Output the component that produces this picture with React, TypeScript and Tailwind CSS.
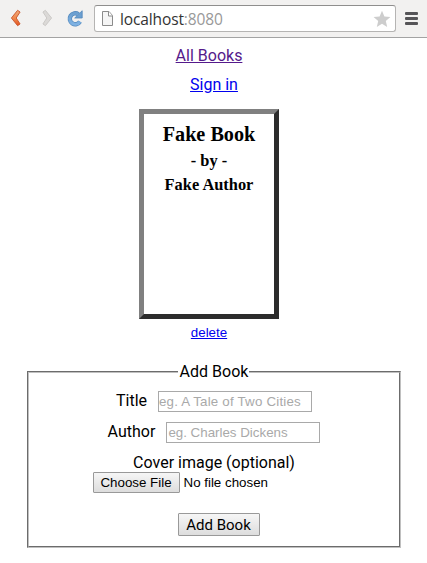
import React from 'react';

function Toolbar() {
  return (
    <header className="flex h-[38px] items-center border-b border-[#a3a3a3] bg-[#f2f1f0]">
      <svg width="94" height="37" viewBox="0 0 94 37" className="shrink-0">
        <defs>
          <linearGradient id="back" x1="0" y1="0" x2="0" y2="1">
            <stop offset="0" stopColor="#f0a878" />
            <stop offset="0.5" stopColor="#f08a4e" />
            <stop offset="1" stopColor="#e2531f" />
          </linearGradient>
          <linearGradient id="reload" x1="0" y1="0" x2="0" y2="1">
            <stop offset="0" stopColor="#6b9fd0" />
            <stop offset="1" stopColor="#7fb2e3" />
          </linearGradient>
        </defs>
        <path d="M17.6 10.3 L20.1 12 L16.2 18 L20.1 24 L17.6 25.7 L11.4 18 Z" fill="url(#back)" stroke="#c9552c" strokeWidth="0.9" strokeLinejoin="round" />
        <path d="M45.4 10.3 L42.9 12 L46.8 18 L42.9 24 L45.4 25.7 L51.6 18 Z" fill="#dbd9d7" stroke="#c8c6c4" strokeWidth="0.9" strokeLinejoin="round" />
        <path d="M78.4 14.2 A5.5 5.5 0 1 0 80 21.6" fill="none" stroke="#5288bd" strokeWidth="4.4" />
        <path d="M82.2 10.7 V18 H74.7 Z" fill="#6b9fd0" stroke="#5288bd" strokeWidth="0.8" strokeLinejoin="round" />
        <path d="M78.4 14.2 A5.5 5.5 0 1 0 80 21.6" fill="none" stroke="url(#reload)" strokeWidth="3" />
      </svg>
      <div className="flex h-[27px] w-[302px] shrink-0 items-center rounded-[3px] border border-[#b5b4b3] border-t-[#8f8e8d] bg-white pl-[7px]">
        <svg width="12" height="15" viewBox="0 0 12 15" className="shrink-0">
          <path d="M0.5 0.5 H7 L10.5 4.5 V14.5 H0.5 Z" fill="#f5f5f5" stroke="#8b8b8b" />
          <path d="M6.5 0.5 V5 H10.5" fill="#fff" stroke="#8b8b8b" />
        </svg>
        <span className="ml-[6px] w-[110px] whitespace-nowrap font-['Open_Sans','Noto_Sans',sans-serif] text-[15.5px] leading-[20px] tracking-[-0.12px] text-[#333]">
          localhost<span className="text-[#999]">:8080</span>
        </span>
        <svg width="18" height="18" viewBox="0 0 18 18" className="ml-auto mr-[4px] shrink-0">
          <path d="M9 .8 L11.4 6.4 L17.4 7 L12.8 11 L14.2 17 L9 13.8 L3.8 17 L5.2 11 L.6 7 L6.6 6.4 Z" fill="#cdcdcd" />
        </svg>
      </div>
      <div className="ml-[9px] flex w-[13px] flex-col gap-[2px]">
        <i className="h-[3px] rounded-[1px] bg-[#555457]" />
        <i className="h-[3px] rounded-[1px] bg-[#555457]" />
        <i className="h-[3px] rounded-[1px] bg-[#555457]" />
      </div>
    </header>
  );
}

function Field({ label, placeholder, spacing }: { label: string; placeholder: string; spacing: string }) {
  return (
    <label className="flex h-[31px] items-start justify-center gap-[11px]">
      <span className="leading-[19px]">{label}</span>
      <input
        placeholder={placeholder}
        className={`h-[21px] w-[154px] border border-[#a9a9a9] font-['Liberation_Sans',Arial,sans-serif] text-[13.33px] leading-[17px] placeholder:text-[#a9a9a9] ${spacing}`}
      />
    </label>
  );
}

const buttonStyle = 'rounded-[1px] border border-[#999] bg-linear-to-b from-[#f6f6f6] to-[#dddddd] text-black whitespace-nowrap';

export default function App() {
  return (
    <div className="h-[563px] w-[427px] overflow-hidden bg-white font-[Roboto,sans-serif] text-base text-black">
      <Toolbar />
      <main className="flex flex-col items-center">
        <a href="#" className="mt-[8px] -ml-[9px] leading-[19px] text-[#551a8b] underline">All Books</a>
        <a href="#" className="mt-[10px] ml-px leading-[19px] text-[#0000ee] underline">Sign in</a>
        <article className="mt-[15px] -ml-[9px] h-[210px] w-[140px] border-[5px] border-t-[#808080] border-r-[#2c2c2c] border-b-[#2c2c2c] border-l-[#808080] pt-[7px] text-center font-['Gentium_Book_Basic','Liberation_Serif',serif] font-bold">
          <h2 className="text-[20.2px] leading-[27px]">Fake Book</h2>
          <p className="pt-px text-[16.4px] leading-[24px]">- by -</p>
          <p className="text-[16.4px] leading-[24px]">Fake Author</p>
        </article>
        <a href="#" className="mt-[6px] -ml-[9px] font-['Liberation_Sans',Arial,sans-serif] text-[13.33px] leading-[15px] text-[#0000ee] underline">delete</a>
        <fieldset className="mt-[22px] h-[186px] w-[374px] border-2 border-[#c0c0c0] [border-style:groove]">
          <legend className="mx-auto pl-[2px] pr-[1px] leading-[19px]">Add Book</legend>
          <div className="pt-[10px] pl-px">
            <Field label="Title" placeholder="eg. A Tale of Two Cities" spacing="px-0 tracking-[0.19px]" />
            <Field label="Author" placeholder="eg. Charles Dickens" spacing="px-px tracking-normal" />
          </div>
          <p className="pl-px text-center leading-[19px]">Cover image (optional)</p>
          <div className="ml-[64px] flex items-center gap-[4px] font-['Liberation_Sans',Arial,sans-serif] text-[13.33px]">
            <button className={`${buttonStyle} h-[21px] w-[87px] leading-[17px]`}>Choose File</button>
            <span>No file chosen</span>
          </div>
          <button className={`${buttonStyle} mt-[20px] ml-[149px] block h-[23px] w-[82px] text-[15px] leading-[20px]`}>Add Book</button>
        </fieldset>
      </main>
    </div>
  );
}
